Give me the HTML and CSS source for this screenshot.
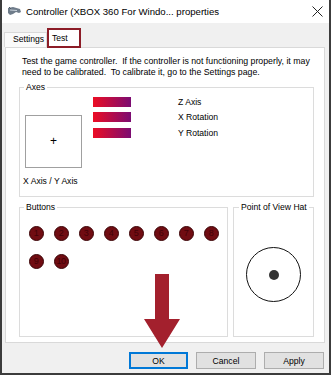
FILE: index.html
```html
<!DOCTYPE html>
<html>
<head>
<meta charset="utf-8">
<link rel="stylesheet" href="styles.css">
</head>
<body>
<div class="window">
  <div class="titlebar">
    <svg class="app-icon" width="15" height="11" viewBox="0 0 15 11">
      <path d="M1 2 L6 1 L13 3 L14 6 L12 7 L9 6 L6 8 L3 9 L1 7 Z" fill="#6f7c8a"/>
      <path d="M3 4 L10 4.5" stroke="#c9d2db" stroke-width="1"/>
      <path d="M2 1 L4 3" stroke="#4d5966" stroke-width="1"/>
    </svg>
    <span class="title">Controller (XBOX 360 For Windo... properties</span>
    <svg class="close" width="11" height="11" viewBox="0 0 11 11">
      <path d="M0.5 0.5 L10.5 10.5 M10.5 0.5 L0.5 10.5" stroke="#222" stroke-width="1"/>
    </svg>
  </div>
  <div class="tabs">
    <div class="tab">Settings</div>
    <div class="tab tab-active">Test</div>
  </div>
  <div class="panel">
    <p class="desc">Test the game controller.&nbsp; If the controller is not functioning properly, it may need to be calibrated.&nbsp; To calibrate it, go to the Settings page.</p>
    <fieldset class="group axes">
      <legend>Axes</legend>
      <div class="axes-body">
        <div class="xy">
          <div class="xy-box"><span class="cross">+</span></div>
          <div class="xy-label">X Axis / Y Axis</div>
        </div>
        <div class="bars">
          <div class="bar-row"><span class="bar"></span><span class="bar-label">Z Axis</span></div>
          <div class="bar-row"><span class="bar"></span><span class="bar-label">X Rotation</span></div>
          <div class="bar-row"><span class="bar"></span><span class="bar-label">Y Rotation</span></div>
        </div>
      </div>
    </fieldset>
    <div class="lower">
      <fieldset class="group buttons">
        <legend>Buttons</legend>
        <div class="btn-grid">
          <span class="dot">1</span><span class="dot">2</span><span class="dot">3</span><span class="dot">4</span>
          <span class="dot">5</span><span class="dot">6</span><span class="dot">7</span><span class="dot">8</span>
          <span class="dot">9</span><span class="dot">10</span>
        </div>
      </fieldset>
      <fieldset class="group hat">
        <legend>Point of View Hat</legend>
        <div class="hat-body">
          <div class="hat-ring"><span class="hat-dot"></span></div>
        </div>
      </fieldset>
    </div>
  </div>
  <div class="footer">
    <button class="btn btn-default">OK</button>
    <button class="btn">Cancel</button>
    <button class="btn">Apply</button>
  </div>
  <svg class="arrow" width="36" height="74" viewBox="0 0 36 74">
    <polygon points="11,0 25,0 25,45 36,45 18,74 0,45 11,45" fill="#a3202d"/>
  </svg>
</div>
</body>
</html>
```
FILE: styles.css
```css
* { box-sizing: border-box; }
html, body { margin: 0; padding: 0; background: #fff; }
body { font-family: "Liberation Sans", Arial, sans-serif; color: #000; }

.window {
  position: relative;
  width: 331px;
  height: 375px;
  background: #f0f0f0;
  border-left: 2px solid #3c3c3c;
  border-right: 2px solid #3c3c3c;
  border-bottom: 2px solid #3c3c3c;
  display: flex;
  flex-direction: column;
  overflow: hidden;
}

.titlebar {
  height: 23px;
  background: #fff;
  display: flex;
  align-items: center;
  padding-left: 5px;
  padding-right: 6px;
  flex: none;
}
.app-icon { flex: none; margin-top: -1px; }
.title { margin-left: 4px; font-size: 9.6px; color: #000; flex: 1; white-space: nowrap; margin-top: -1px; }
.close { flex: none; margin-top: -1px; }

.tabs {
  height: 24px;
  display: flex;
  align-items: flex-end;
  padding-left: 2px;
  flex: none;
  position: relative;
  z-index: 1;
}
.tab {
  font-size: 8.6px;
  height: 15px;
  line-height: 13px;
  padding: 0 4px 0 8px;
  background: #fafafa;
  border: 1px solid #d9d9d9;
  border-bottom: none;
  width: 43px;
  margin-bottom: 0;
}
.tab-active {
  width: 34px;
  height: 20px;
  padding: 2px 0 0 3px;
  line-height: 13px;
  background: #fff;
  border: 2px solid #8c1c27;
  margin-bottom: -1px;
}

.panel {
  margin: 0 4px 0 3px;
  height: 296px;
  background: #fff;
  border: 1px solid #d9d9d9;
  padding: 0 10px 0 13px;
  flex: none;
}
.desc {
  margin: 8px 0 0 3px;
  font-size: 8.75px;
  line-height: 11px;
  color: #000;
}

.group {
  margin: 0;
  padding: 0;
  border: 1px solid #dcdcdc;
  min-width: 0;
}
.group legend {
  font-size: 8.6px;
  line-height: 11px;
  padding: 0 2px;
  margin-left: 4px;
}

.axes { margin-top: 4px; height: 114.5px; }
.axes-body { display: flex; padding-left: 5px; }
.xy { display: flex; flex-direction: column; margin-top: 21.5px; }
.xy-box {
  width: 57px;
  height: 53px;
  border: 1px solid #a0a0a0;
  display: flex;
  align-items: center;
  justify-content: center;
}
.cross { font-size: 12px; line-height: 12px; }
.xy-label { font-size: 8.6px; line-height: 11px; margin-top: 8.5px; margin-left: -2px; white-space: nowrap; }

.bars { display: flex; flex-direction: column; margin-left: 11px; margin-top: 3.5px; }
.bar-row { height: 15.5px; display: flex; align-items: flex-start; }
.bar {
  width: 38px;
  height: 10px;
  background: linear-gradient(to right, #ec0d24, #7b0c72);
}
.bar-label { font-size: 8.6px; line-height: 10px; margin-left: 47px; white-space: nowrap; }

.lower { display: flex; gap: 5px; margin-top: 5.5px; }
.buttons { width: 209px; height: 134.5px; }
.hat { width: 81px; height: 134.5px; }
.hat legend { margin-left: 5px; }

.btn-grid {
  display: grid;
  grid-template-columns: repeat(8, 15px);
  column-gap: 10px;
  row-gap: 13px;
  padding: 13px 0 0 8.5px;
}
.dot {
  width: 15px;
  height: 15px;
  border-radius: 50%;
  background: #700c12;
  border: 1px solid #3c0407;
  color: #420207;
  font-size: 9px;
  line-height: 13px;
  text-align: center;
  letter-spacing: -0.5px;
}

.hat-body { height: 123px; display: flex; align-items: center; justify-content: center; }
.hat-ring {
  width: 55px;
  height: 55px;
  border: 1px solid #111;
  border-radius: 50%;
  display: flex;
  align-items: center;
  justify-content: center;
}
.hat-dot { width: 10px; height: 10px; border-radius: 50%; background: #333; }

.footer {
  flex: 1;
  display: flex;
  justify-content: flex-end;
  align-items: flex-start;
  padding: 9px 5px 0 0;
  gap: 8px;
}
.btn {
  width: 60px;
  height: 17px;
  padding: 0;
  font-family: "Liberation Sans", Arial, sans-serif;
  font-size: 8.6px;
  background: #e1e1e1;
  border: 1px solid #adadad;
  color: #000;
}
.btn-default { border: 2px solid #0078d7; width: 59px; }

.arrow { position: absolute; left: 142px; top: 274px; }
```
